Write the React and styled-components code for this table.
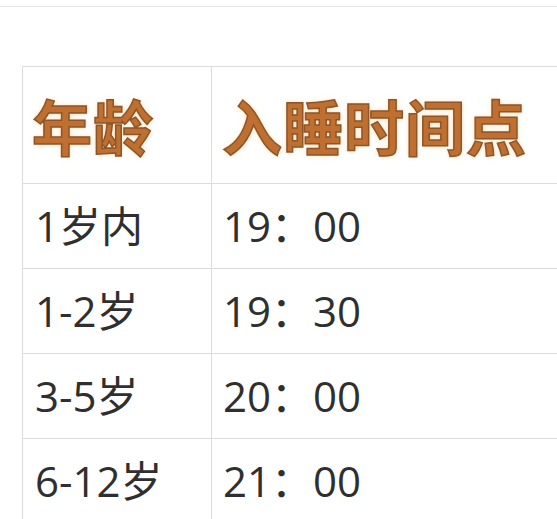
import styled, { createGlobalStyle } from "styled-components";

const GlobalStyle = createGlobalStyle`
  html, body {
    margin: 0;
    padding: 0;
    background: #ffffff;
  }
  body {
    font-family: "Noto Sans CJK SC", "Noto Sans", sans-serif;
  }
`;

const Page = styled.div`
  width: 557px;
  height: 519px;
  overflow: hidden;
  background: #fff;
`;

const TopRule = styled.div`
  height: 6px;
  border-bottom: 1px solid #e6e6e6;
  margin-bottom: 59px;
`;

const Table = styled.table`
  margin-left: 22px;
  width: 560px;
  border-collapse: collapse;
  table-layout: fixed;
`;

const HeadCell = styled.th`
  height: 116px;
  padding: 0 0 0 ${(p) => p.$pad}px;
  text-align: left;
  vertical-align: middle;
  border: 1px solid #dcdcdc;
  font-size: 60px;
  font-weight: 700;
  line-height: 1;
  color: #bf6f30;
  -webkit-text-stroke: 1.5px #8d5529;
  text-shadow: 0 0 3px #ffd9a8, 0 0 7px #ffe9cc;
  letter-spacing: 1px;
`;

const Cell = styled.td`
  height: 84px;
  padding: 0 0 0 ${(p) => p.$pad}px;
  border: 1px solid #dcdcdc;
  font-family: "Open Sans", "Noto Sans CJK SC", sans-serif;
  font-size: 42px;
  font-weight: 400;
  line-height: 1;
  color: #2f2f2f;
  vertical-align: middle;
  white-space: nowrap;
`;

const rows = [
  ["1岁内", "19：00"],
  ["1-2岁", "19：30"],
  ["3-5岁", "20：00"],
  ["6-12岁", "21：00"],
];

export default function App() {
  return (
    <Page>
      <GlobalStyle />
      <TopRule />
      <Table>
        <colgroup>
          <col style={{ width: 189 }} />
          <col />
        </colgroup>
        <thead>
          <tr>
            <HeadCell $pad={9}>年龄</HeadCell>
            <HeadCell $pad={10}>入睡时间点</HeadCell>
          </tr>
        </thead>
        <tbody>
          {rows.map(([age, time]) => (
            <tr key={age}>
              <Cell $pad={12}>{age}</Cell>
              <Cell $pad={11}>{time}</Cell>
            </tr>
          ))}
        </tbody>
      </Table>
    </Page>
  );
}
